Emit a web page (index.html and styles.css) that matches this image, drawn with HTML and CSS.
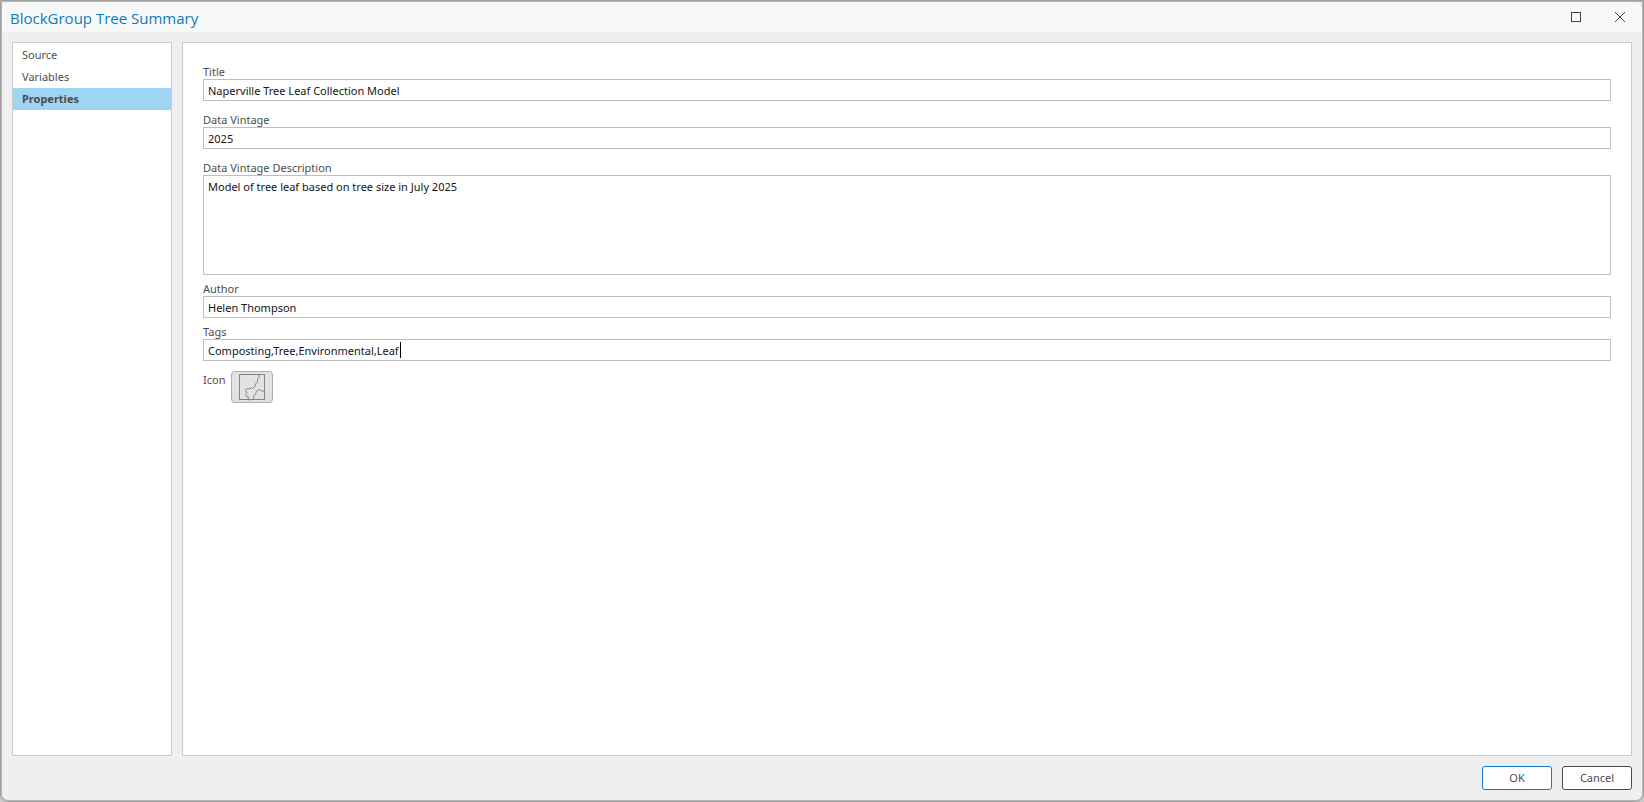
FILE: index.html
```
<!DOCTYPE html>
<html lang="en">
<head>
  <meta charset="UTF-8" />
  <meta name="viewport" content="width=device-width, initial-scale=1" />
  <title>BlockGroup Tree Summary</title>
  <link rel="stylesheet" href="styles.css">
</head>
<body>

<div class="window">
  <header class="title-bar">
    <h1>BlockGroup Tree Summary</h1>
    <div class="window-controls">
      <button type="button" aria-label="Maximize">
        <svg width="12" height="12" viewBox="0 0 12 12"><rect x="1.5" y="1.5" width="9" height="9" /></svg>
      </button>
      <button type="button" aria-label="Close">
        <svg width="12" height="12" viewBox="0 0 12 12"><path d="M1 1l10 10M11 1L1 11" /></svg>
      </button>
    </div>
  </header>

  <div class="content">
    <nav class="sidebar">
      <a href="#source">Source</a>
      <a href="#variables">Variables</a>
      <a href="#properties" class="active">Properties</a>
    </nav>

    <form class="panel" id="properties">
      <div class="field">
        <label for="title">Title</label>
        <input type="text" id="title" value="Naperville Tree Leaf Collection Model" />
      </div>
      <div class="field">
        <label for="vintage">Data Vintage</label>
        <input type="text" id="vintage" value="2025" />
      </div>
      <div class="field compact">
        <label for="description">Data Vintage Description</label>
        <textarea id="description">Model of tree leaf based on tree size in July 2025</textarea>
      </div>
      <div class="field compact">
        <label for="author">Author</label>
        <input type="text" id="author" value="Helen Thompson" />
      </div>
      <div class="field last">
        <label for="tags">Tags</label>
        <div class="caret-box">
          <input type="text" id="tags" value="Composting,Tree,Environmental,Leaf" />
          <span class="caret"></span>
        </div>
      </div>
      <div class="icon-row">
        <label for="icon">Icon</label>
        <button type="button" class="icon-button" id="icon">
          <svg width="28" height="28" viewBox="0 0 28 28">
            <rect x="1.5" y="1.5" width="25" height="25" />
            <path d="M21 2v2.5L19.500 6v3l-2 2-.5 2.5-2.500 2-1-1-1.500 1.500-3-.5-1.500 2 1.500 2-1.500 2 1 2 2 .5-.5 2 1.500 1v1.500" />
            <path d="M15.5 26.5l.5-4 1.500-1.500 1-3 3-1.500 2 1.500h3" />
          </svg>
        </button>
      </div>
    </form>
  </div>

  <footer class="actions">
    <button type="button" class="btn primary">OK</button>
    <button type="button" class="btn">Cancel</button>
  </footer>
</div>

</body>
</html>
```
FILE: styles.css
```
* {
  box-sizing: border-box;
}
body {
  margin: 0;
  background: #c8c8ca;
  color: #4c4c4c;
  font-family: "Segoe UI", "Noto Sans", "Open Sans", sans-serif;
  font-size: 11px;
  line-height: 16px;
}
button, input, textarea {
  font: inherit;
  color: inherit;
}
.window {
  display: flex;
  flex-direction: column;
  min-height: 100vh;
  border: 1px solid #a0a0a2;
  box-shadow: inset 0 0 0 1px #b4b4b6;
  border-radius: 0 0 8px 8px;
  background: #edeff1;
  padding: 1px;
}
.title-bar {
  display: flex;
  align-items: center;
  justify-content: space-between;
  height: 30px;
  padding: 0 6px 0 8px;
  border-radius: 8px 8px 0 0;
  background: #f7f9f8;
}
.title-bar h1 {
  margin: 0;
  padding-top: 2px;
  font-family: "Segoe UI", "Open Sans", sans-serif;
  font-size: 15px;
  font-weight: 400;
  line-height: 28px;
  color: #0f79c0;
}
.window-controls {
  display: flex;
  gap: 12px;
}
.window-controls button {
  display: flex;
  align-items: center;
  justify-content: center;
  width: 32px;
  height: 28px;
  padding: 0;
  border: none;
  background: none;
}
.window-controls svg {
  fill: none;
  stroke: #404040;
}
.content {
  flex: 1;
  display: flex;
  gap: 10px;
  padding: 10px 10px 0;
}
.sidebar {
  width: 160px;
  padding-top: 1px;
  border: 1px solid #c8c9cb;
  background: #fff;
}
.sidebar a {
  display: block;
  padding: 0 9px;
  line-height: 22px;
  color: #4c4c4c;
  text-decoration: none;
}
.sidebar a.active {
  background: #9fd4f3;
  font-weight: 700;
}
.panel {
  flex: 1;
  padding: 22px 20px 20px;
  border: 1px solid #c8c9cb;
  background: #fff;
}
.field {
  margin-bottom: 12px;
}
.field.compact {
  margin-bottom: 7px;
}
.field.last {
  margin-bottom: 10px;
}
.field label {
  display: block;
  line-height: 14px;
}
.field input, .field textarea {
  display: block;
  width: 100%;
  height: 22px;
  padding: 0 4px;
  border: 1px solid #bebfc1;
  border-radius: 0;
  outline: none;
  background: #fff;
  color: #151515;
}
.field textarea {
  height: 100px;
  padding: 3px 4px;
  resize: none;
}
.caret-box {
  position: relative;
}
.caret {
  position: absolute;
  top: 3px;
  left: 197px;
  width: 1px;
  height: 16px;
  background: #000;
}
.icon-row {
  display: flex;
  gap: 6px;
  line-height: 18px;
}
.icon-button {
  display: flex;
  align-items: center;
  justify-content: center;
  width: 42px;
  height: 32px;
  padding: 0;
  border: 1px solid #acadaf;
  border-radius: 4px;
  background: #e1e2e4;
}
.icon-button svg {
  fill: none;
  stroke: #828487;
}
.actions {
  display: flex;
  justify-content: flex-end;
  gap: 10px;
  padding: 10px;
}
.btn {
  width: 70px;
  height: 24px;
  padding: 0;
  border: 1px solid #4c4c4c;
  border-radius: 3px;
  background: #fff;
}
.btn.primary {
  border-color: #0f79d0;
}
```
